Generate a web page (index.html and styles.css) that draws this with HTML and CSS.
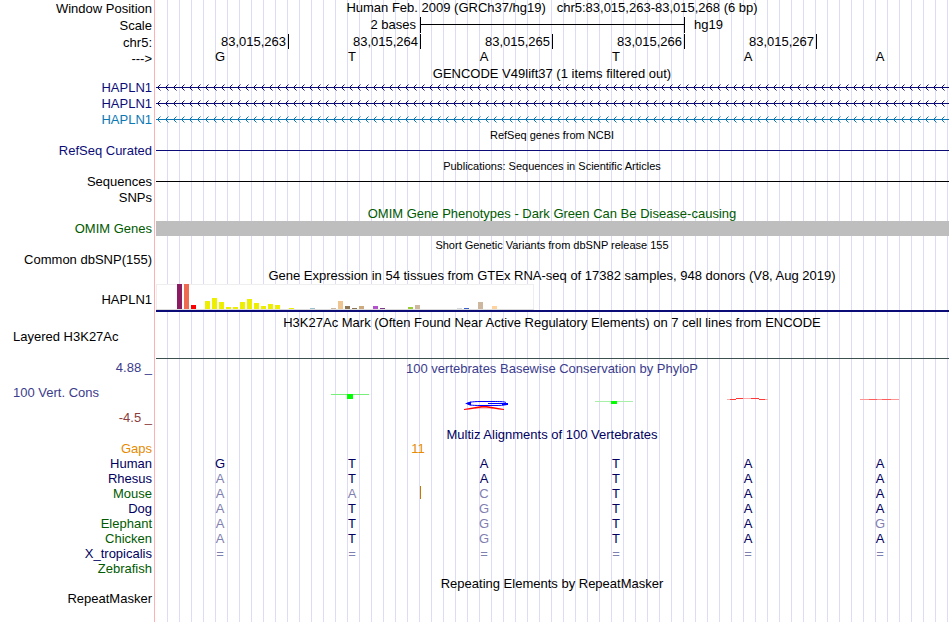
FILE: index.html
```html
<!DOCTYPE html>
<html lang="en">
<head>
<meta charset="utf-8">
<title>Human chr5:83,015,263-83,015,268</title>
<link rel="stylesheet" href="styles.css">
</head>
<body>
<main class="browser">
  <section class="ruler">
    <div class="row">
      <div class="label">Window Position</div>
      <h1 class="title position">Human Feb. 2009 (GRCh37/hg19) &nbsp; chr5:83,015,263-83,015,268 (6 bp)</h1>
    </div>
    <div class="row scale-row">
      <div class="label">Scale</div>
      <div class="bases">
        <span class="scale-name">2 bases</span>
        <span class="scale-bar"></span>
        <span class="scale-db">hg19</span>
      </div>
    </div>
    <div class="row coords-row">
      <div class="label">chr5:</div>
      <div class="bases coords">
        <span>83,015,263</span><span>83,015,264</span><span>83,015,265</span><span>83,015,266</span><span>83,015,267</span><span></span>
      </div>
    </div>
    <div class="row">
      <div class="label">---&gt;</div>
      <div class="bases letters">
        <span>G</span><span>T</span><span>A</span><span>T</span><span>A</span><span>A</span>
      </div>
    </div>
  </section>

  <section>
    <h2 class="title tight">GENCODE V49lift37 (1 items filtered out)</h2>
    <div class="row navy">
      <div class="label">HAPLN1</div>
      <svg class="gene" aria-hidden="true">
        <defs>
          <pattern id="intron" width="8" height="16" patternUnits="userSpaceOnUse">
            <path d="M0 7.5H8M4.500 4.500L1.500 7.500L4.500 10.500" fill="none" stroke="#0c0c78"/>
          </pattern>
          <pattern id="intron-alt" width="8" height="16" patternUnits="userSpaceOnUse">
            <path d="M0 7.5H8M4.500 4.500L1.500 7.500L4.500 10.500" fill="none" stroke="#0c78b4"/>
          </pattern>
        </defs>
        <rect width="100%" height="16" fill="url(#intron)"/>
      </svg>
    </div>
    <div class="row navy">
      <div class="label">HAPLN1</div>
      <svg class="gene" aria-hidden="true"><rect width="100%" height="16" fill="url(#intron)"/></svg>
    </div>
    <div class="row blue">
      <div class="label">HAPLN1</div>
      <svg class="gene" aria-hidden="true"><rect width="100%" height="16" fill="url(#intron-alt)"/></svg>
    </div>
  </section>

  <section>
    <h2 class="title small">RefSeq genes from NCBI</h2>
    <div class="row navy">
      <div class="label">RefSeq Curated</div>
      <div class="line"></div>
    </div>
  </section>

  <section>
    <h2 class="title small">Publications: Sequences in Scientific Articles</h2>
    <div class="row">
      <div class="label">Sequences</div>
      <div class="line"></div>
    </div>
    <div class="row">
      <div class="label">SNPs</div>
    </div>
  </section>

  <section>
    <h2 class="title green">OMIM Gene Phenotypes - Dark Green Can Be Disease-causing</h2>
    <div class="row green omim">
      <div class="label">OMIM Genes</div>
      <div class="block"></div>
    </div>
  </section>

  <section>
    <h2 class="title small variants-title">Short Genetic Variants from dbSNP release 155</h2>
    <div class="row">
      <div class="label">Common dbSNP(155)</div>
    </div>
  </section>

  <section>
    <h2 class="title expression-title">Gene Expression in 54 tissues from GTEx RNA-seq of 17382 samples, 948 donors (V8, Aug 2019)</h2>
    <div class="row expression">
      <div class="label">HAPLN1</div>
      <div class="chart">
        <svg width="378" height="26" shape-rendering="crispEdges" aria-hidden="true">
          <rect width="378" height="26" fill="#eeeeee"/>
          <rect x="1" y="1" width="376" height="24" fill="#ffffff"/>
          <rect y="25" width="378" height="1" fill="#dcdcdc"/>
          <rect x="21" y="0" width="5" height="25" fill="#8b1c62"/>
          <rect x="28" y="0" width="5" height="25" fill="#ee6a50"/>
          <rect x="35" y="21" width="5" height="4" fill="#ff0000"/>
          <g fill="#eeee00">
            <rect x="49" y="17" width="5" height="8"/>
            <rect x="56" y="14" width="5" height="11"/>
            <rect x="63" y="18" width="5" height="7"/>
            <rect x="70" y="23" width="5" height="2"/>
            <rect x="77" y="23" width="5" height="2"/>
            <rect x="84" y="18" width="5" height="7"/>
            <rect x="91" y="15" width="5" height="10"/>
            <rect x="98" y="19" width="5" height="6"/>
            <rect x="105" y="22" width="5" height="3"/>
            <rect x="112" y="20" width="5" height="5"/>
            <rect x="119" y="21" width="5" height="4"/>
            <rect x="133" y="24" width="5" height="1"/>
          </g>
          <rect x="154" y="24" width="5" height="1" fill="#9ac0cd"/>
          <rect x="175" y="24" width="5" height="1" fill="#cdb79e"/>
          <rect x="182" y="17" width="5" height="8" fill="#eec591"/>
          <rect x="189" y="22" width="5" height="3" fill="#8b7355"/>
          <rect x="196" y="24" width="5" height="1" fill="#8b7355"/>
          <rect x="203" y="22" width="5" height="3" fill="#cdaa7d"/>
          <rect x="217" y="22" width="5" height="3" fill="#b452cd"/>
          <rect x="224" y="24" width="5" height="1" fill="#7a378b"/>
          <rect x="252" y="23" width="5" height="2" fill="#9acd32"/>
          <rect x="259" y="21" width="5" height="4" fill="#cdb79e"/>
          <rect x="301" y="24" width="5" height="1" fill="#d0d8e0"/>
          <rect x="308" y="24" width="5" height="1" fill="#3a5fcd"/>
          <rect x="322" y="18" width="5" height="7" fill="#cdb79e"/>
          <rect x="336" y="22" width="5" height="3" fill="#ffd39b"/>
        </svg>
      </div>
    </div>
  </section>

  <section class="histone">
    <h2 class="title">H3K27Ac Mark (Often Found Near Active Regulatory Elements) on 7 cell lines from ENCODE</h2>
    <div class="row signal">
      <div class="label start">Layered H3K27Ac</div>
      <div class="floor"></div>
    </div>
  </section>

  <section class="conservation">
    <div class="row slate scores-head">
      <div class="label">4.88 _</div>
      <h2 class="title">100 vertebrates Basewise Conservation by PhyloP</h2>
    </div>
    <div class="row scores">
      <div class="label axis">
        <span class="axis-name">100 Vert. Cons</span>
        <span class="axis-min">-4.5 _</span>
      </div>
      <div class="bases logos">
        <svg width="132" height="50" aria-hidden="true"></svg>
        <svg width="132" height="50" aria-hidden="true">
          <rect x="43" y="17" width="38" height="1" fill="#78f078"/>
          <rect x="59" y="17" width="6" height="5" fill="#00ff00"/>
        </svg>
        <svg width="132" height="50" aria-hidden="true">
          <path d="M86 25.500C84 24.500 79 24.500 73 24.500H60C52 24.500 48 25.500 47 26.500C48 28 52 28.500 60 28.500H76C82 28.500 85 28 87 27.500M68 26.500H87" fill="none" stroke="#0000ff"/>
          <path d="M45 26.500L51 24.500V28.500Z" fill="#0000ff"/>
          <rect x="82" y="26" width="6" height="2" fill="#0000ff"/>
          <path d="M44 32L61 29H67L84 32V33L79 32.500L66 30.500H62L49 32.500L44 33Z" fill="#ff0000"/>
          <path d="M55 31H73" fill="none" stroke="#ff0000" stroke-opacity="0.4"/>
        </svg>
        <svg width="132" height="50" aria-hidden="true">
          <rect x="43" y="24" width="38" height="1" fill="#a8f0a8"/>
          <rect x="59" y="24" width="6" height="3" fill="#00ff00"/>
        </svg>
        <svg width="132" height="50" aria-hidden="true">
          <path d="M44 22.500H52M75 22.500H83M52 21.500H75" fill="none" stroke="#ff3838"/>
          <path d="M43 22.500H46M59 21.500H67M81 22.500H84" fill="none" stroke="#ffaaaa"/>
        </svg>
        <svg width="132" height="50" aria-hidden="true">
          <path d="M44 22.500H83" fill="none" stroke="#ff9494"/>
          <path d="M53 22.500H61M66 22.500H75" fill="none" stroke="#ff5c5c"/>
        </svg>
      </div>
    </div>
  </section>

  <section>
    <h2 class="title tight deep" id="multiz">Multiz Alignments of 100 Vertebrates</h2>
    <table class="alignment" aria-labelledby="multiz">
      <colgroup><col class="species"><col span="6"></colgroup>
      <tbody>
        <tr class="gaps"><th scope="row">Gaps</th><td></td><td colspan="2">11</td><td></td><td></td><td></td></tr>
        <tr><th scope="row">Human</th><td>G</td><td>T</td><td>A</td><td>T</td><td>A</td><td>A</td></tr>
        <tr><th scope="row">Rhesus</th><td class="diff">A</td><td>T</td><td>A</td><td>T</td><td>A</td><td>A</td></tr>
        <tr><th scope="row" class="green">Mouse</th><td class="diff">A</td><td class="diff">A</td><td class="diff insert">C</td><td>T</td><td>A</td><td>A</td></tr>
        <tr><th scope="row">Dog</th><td class="diff">A</td><td>T</td><td class="diff">G</td><td>T</td><td>A</td><td>A</td></tr>
        <tr><th scope="row" class="green">Elephant</th><td class="diff">A</td><td>T</td><td class="diff">G</td><td>T</td><td>A</td><td class="diff">G</td></tr>
        <tr><th scope="row" class="green">Chicken</th><td class="diff">A</td><td>T</td><td class="diff">G</td><td>T</td><td>A</td><td>A</td></tr>
        <tr><th scope="row">X_tropicalis</th><td class="diff">=</td><td class="diff">=</td><td class="diff">=</td><td class="diff">=</td><td class="diff">=</td><td class="diff">=</td></tr>
        <tr><th scope="row" class="green">Zebrafish</th><td></td><td></td><td></td><td></td><td></td><td></td></tr>
      </tbody>
    </table>
  </section>

  <section>
    <h2 class="title">Repeating Elements by RepeatMasker</h2>
    <div class="row">
      <div class="label">RepeatMasker</div>
    </div>
  </section>
</main>
</body>
</html>
```
FILE: styles.css
```css
* {
  box-sizing: border-box;
}

body {
  margin: 0;
  background: #ffffff;
  color: #000000;
  font-family: "Liberation Sans", Arial, Helvetica, sans-serif;
  font-size: 13px;
  line-height: 16px;
}

/* Red divider after the labels, then a guide line every 12px */
.browser {
  min-height: 100vh;
  padding-right: 1px;
  background:
    linear-gradient(#ffb0b0, #ffb0b0) 154px 0 / 1px 100% no-repeat,
    linear-gradient(90deg, #ffffff 156px, transparent 156px),
    repeating-linear-gradient(90deg, transparent 0 11px, #dcdcf8 11px 12px);
}

.row {
  display: flex;
  height: 16px;
}

.label {
  flex: none;
  width: 156px;
  padding-right: 4px;
  text-align: right;
  white-space: nowrap;
}

.title {
  height: 15px;
  margin: 0 1px 0 156px;
  font-size: 13px;
  font-weight: normal;
  line-height: 15px;
  text-align: center;
  white-space: nowrap;
}

.small {
  font-size: 11px;
}

.tight {
  height: 14px;
}

.row .title {
  flex: 1;
  margin-left: 0;
}

.navy { color: #0c0c78; }
.blue { color: #0c78b4; }
.green { color: #005a00; }
.slate { color: #3c3c8c; }
.deep { color: #000060; }

.bases {
  flex: 1;
  display: grid;
  grid-template-columns: repeat(6, 1fr);
  margin-right: 1px;
}

/* Ruler */
.ruler .label {
  line-height: 18px;
}

.scale-row {
  height: 17px;
  padding-top: 1px;
}

.scale-name {
  grid-column: 1 / 3;
  padding-right: 4px;
  text-align: right;
}

.scale-bar {
  grid-column: 3 / 5;
  border-left: 1px solid #000000;
  background: linear-gradient(#000000, #000000) 0 7px / 100% 1px no-repeat;
}

.scale-db {
  grid-column: 5 / 7;
  padding-left: 9px;
  border-left: 1px solid #000000;
}

.coords-row {
  padding-top: 1px;
  height: 17px;
}

.coords span {
  height: 15px;
  padding-right: 2px;
  text-align: right;
}

.coords span + span {
  border-left: 1px solid #000000;
}

.letters span {
  padding-right: 4px;
  line-height: 14px;
  text-align: center;
}

/* Gene and item tracks */
.gene {
  flex: 1;
  min-width: 0;
  height: 16px;
}

.line {
  flex: 1;
  height: 8px;
  border-bottom: 1px solid currentColor;
}

.omim {
  height: 15px;
}

.block {
  flex: 1;
  background: #bebebe;
}

.variants-title {
  height: 16px;
  line-height: 18px;
}

/* Expression chart */
.expression-title {
  height: 16px;
  line-height: 16px;
}

.expression {
  height: 28px;
}

.expression .label {
  line-height: 32px;
}

.chart {
  flex: 1;
  border-bottom: 2px solid #0c0c78;
}

.chart svg {
  display: block;
}

/* Signal tracks */
.histone {
  padding-top: 3px;
}

.signal {
  height: 29px;
}

.start {
  padding-left: 13px;
  text-align: left;
}

.signal .label {
  line-height: 14px;
}

.floor {
  flex: 1;
  border-bottom: 1px solid #3c5050;
}

.conservation {
  padding-top: 1px;
}

.scores-head {
  height: 17px;
}

.scores-head .title {
  line-height: 17px;
}

.scores {
  height: 50px;
}

.axis {
  display: flex;
  flex-direction: column;
  gap: 9px;
  padding-top: 8px;
}

.axis-name {
  padding-left: 13px;
  color: #3c3c8c;
  text-align: left;
}

.axis-min {
  color: #8c3c3c;
}

.logos svg {
  display: block;
  width: 100%;
}

/* Alignment */
.alignment {
  width: calc(100% - 1px);
  border-collapse: collapse;
  table-layout: fixed;
  color: #000060;
  line-height: 15px;
}

.species {
  width: 156px;
}

.alignment th,
.alignment td {
  height: 15px;
  padding: 0 4px 0 0;
  font-weight: normal;
  text-align: center;
}

.alignment th {
  text-align: right;
}

.alignment .diff {
  color: #8080b0;
}

.alignment .gaps {
  color: #e68a00;
}

.alignment .insert {
  background: linear-gradient(#c87800, #c87800) 0 0 / 1px 13px no-repeat;
}
```
